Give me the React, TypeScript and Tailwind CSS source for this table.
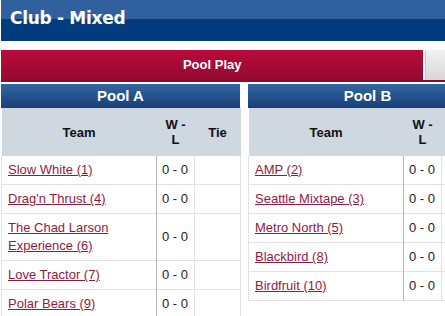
import React from "react";

type Row = { team: string; wl: string };

const poolA: Row[] = [
  { team: "Slow White (1)", wl: "0 - 0" },
  { team: "Drag'n Thrust (4)", wl: "0 - 0" },
  { team: "The Chad Larson Experience (6)", wl: "0 - 0" },
  { team: "Love Tractor (7)", wl: "0 - 0" },
  { team: "Polar Bears (9)", wl: "0 - 0" },
];

const poolB: Row[] = [
  { team: "AMP (2)", wl: "0 - 0" },
  { team: "Seattle Mixtape (3)", wl: "0 - 0" },
  { team: "Metro North (5)", wl: "0 - 0" },
  { team: "Blackbird (8)", wl: "0 - 0" },
  { team: "Birdfruit (10)", wl: "0 - 0" },
];

function Pool({ name, rows }: { name: string; rows: Row[] }) {
  return (
    <div className="w-[239px] shrink-0">
      <div className="h-[24px] bg-gradient-to-b from-[#3467a2] to-[#173f76] text-white font-bold text-[15px] leading-[24px] text-center">
        {name}
      </div>
      <table className="w-[239px] border-collapse table-fixed text-[13px] leading-[18px]">
        <colgroup>
          <col className="w-[155px]" />
          <col className="w-[38px]" />
          <col className="w-[46px]" />
        </colgroup>
        <thead>
          <tr className="bg-[#cfd8e1] text-[#111]">
            <th className="h-[48px] font-bold leading-[15px]">Team</th>
            <th className="h-[48px] font-bold leading-[15px]">
              W -<br />L
            </th>
            <th className="h-[48px] font-bold leading-[15px]">Tie</th>
          </tr>
        </thead>
        <tbody>
          {rows.map((r) => (
            <tr key={r.team} className="border-b border-[#e2e2e2]">
              <td className="border-l border-[#e2e2e2] border-r border-r-[#b9b9b9] px-[6px] py-[5px] align-middle">
                <a href="#" className="text-[#97173f] underline">
                  {r.team}
                </a>
              </td>
              <td className="border-r border-[#e2e2e2] px-[5px] text-[#222] whitespace-nowrap">
                {r.wl}
              </td>
              <td className="border-r border-[#e2e2e2]"></td>
            </tr>
          ))}
        </tbody>
      </table>
    </div>
  );
}

export default function App() {
  return (
    <div
      className="w-[445px] h-[316px] overflow-hidden bg-white pl-px"
      style={{ fontFamily: '"Liberation Sans", Arial, sans-serif' }}
    >
      <div className="h-[41px] bg-[#023b7e] relative">
        <div className="h-[19px] bg-[#30609d]" />
        <h1
          className="absolute left-[9px] top-[8px] text-white font-bold text-[17px] leading-[20px] tracking-[-0.3px]"
          style={{ fontFamily: '"DejaVu Sans", Verdana, sans-serif' }}
        >
          Club - Mixed
        </h1>
      </div>
      <div className="mt-[9px] flex border-b-2 border-[#8a0b2d]">
        <div className="w-[432px] h-[30px] bg-gradient-to-b from-[#b90a3b] to-[#950a31] text-white font-bold text-[13px] leading-[30px] text-center">
          Pool Play
        </div>
        <div className="ml-[2px] w-[20px] h-[30px] bg-gradient-to-b from-[#f2f2f2] to-[#d6d6d6] border-l border-[#c8c8c8]" />
      </div>
      <div className="mt-[2px] flex gap-[8px]">
        <Pool name="Pool A" rows={poolA} />
        <Pool name="Pool B" rows={poolB} />
      </div>
    </div>
  );
}
